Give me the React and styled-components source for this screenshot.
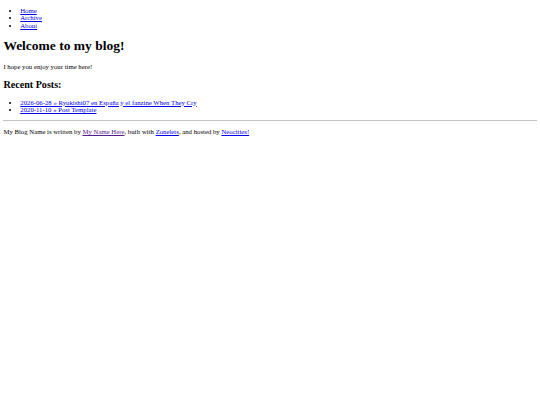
import React from "react";
import styled, { createGlobalStyle } from "styled-components";

// the whole page is a plain document drawn at 1280px and shrunk to fit
const unit = 0.421875;
const px = (n) => `${n * unit}px`;

const GlobalStyle = createGlobalStyle`
  html, body {
    background: #fff;
  }
  body {
    margin: 0 ${px(8)} ${px(8)};
    font-family: "Liberation Serif", "Times New Roman", serif;
    font-size: ${px(16)};
    line-height: 7.5px;
    color: #000;
  }
`;

const List = styled.ul`
  margin: ${px(16)} 0;
  padding-left: ${px(40)};
  list-style: disc;
`;

const Item = styled.li`
  line-height: 7.5px;
`;

const Link = styled.a`
  color: ${(p) => (p.visited ? "#551a8b" : "#0000ee")};
  text-decoration: underline;
`;

const Title = styled.h1`
  margin: ${px(21.44)} 0;
  font-size: ${px(32)};
  font-weight: bold;
  line-height: 15.5px;
`;

const SubTitle = styled.h2`
  margin: ${px(19.92)} 0;
  font-size: ${px(24)};
  font-weight: bold;
  line-height: 11.6px;
`;

const Text = styled.p`
  margin: ${px(16)} 0;
`;

const Rule = styled.hr`
  margin: ${px(8)} 0;
  height: 0;
  border: none;
  border-top: 1px solid #c4c4c4;
`;

const nav = ["Home", "Archive", "About"];

const posts = [
  "2026-06-28 » Ryukishi07 en España y el fanzine When They Cry",
  "2020-11-10 » Post Template",
];

export default function App() {
  return (
    <>
      <GlobalStyle />
      <List>
        {nav.map((label) => (
          <Item key={label}>
            <Link href="#">{label}</Link>
          </Item>
        ))}
      </List>
      <Title>Welcome to my blog!</Title>
      <Text>I hope you enjoy your time here!</Text>
      <SubTitle>Recent Posts:</SubTitle>
      <List>
        {posts.map((post) => (
          <Item key={post}>
            <Link href="#">{post}</Link>
          </Item>
        ))}
      </List>
      <Rule />
      <Text>
        My Blog Name is written by <Link href="#" visited>My Name Here</Link>,
        built with <Link href="#">Zonelets</Link>, and hosted by{" "}
        <Link href="#">Neocities!</Link>
      </Text>
    </>
  );
}
